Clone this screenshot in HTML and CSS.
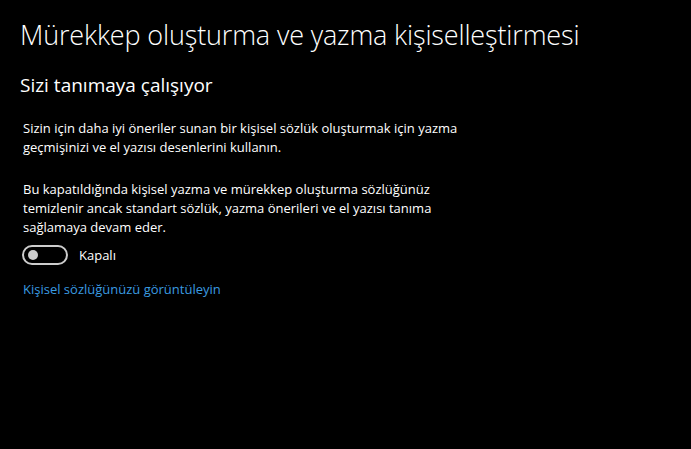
FILE: index.html
```html
<!DOCTYPE html>
<html lang="tr">
<head>
    <meta charset="UTF-8">
    <title>Mürekkep oluşturma ve yazma kişiselleştirmesi</title>
    <link rel="stylesheet" href="styles.css">
</head>
<body>
    <div class="page">
        <h1 class="title">Mürekkep oluşturma ve yazma kişiselleştirmesi</h1>
        <h2 class="subtitle">Sizi tanımaya çalışıyor</h2>
        <p class="text">Sizin için daha iyi öneriler sunan bir kişisel sözlük oluşturmak için yazma geçmişinizi ve el yazısı desenlerini kullanın.</p>
        <p class="text">Bu kapatıldığında kişisel yazma ve mürekkep oluşturma sözlüğünüz temizlenir ancak standart sözlük, yazma önerileri ve el yazısı tanıma sağlamaya devam eder.</p>
        <div class="toggle-row">
            <div class="toggle"><div class="knob"></div></div>
            <span class="toggle-label">Kapalı</span>
        </div>
        <a class="link" href="#">Kişisel sözlüğünüzü görüntüleyin</a>
    </div>
</body>
</html>
```

FILE: styles.css
```css
body {
    margin: 0;
    background: #000;
    color: #fff;
    font-family: "Open Sans", "Noto Sans", sans-serif;
    height: 100vh;
}
.page {
    padding: 12px 20px 0 20px;
}
.title {
    font-size: 27px;
    font-weight: 300;
    margin: 0;
    line-height: 46px;
    letter-spacing: -0.15px;
}
.subtitle {
    font-size: 19px;
    font-weight: 400;
    margin: 14px 0 0 0;
    line-height: 26px;
}
.text {
    font-size: 13px;
    line-height: 19px;
    width: 455px;
    margin: 21px 0 0 3px;
}
.text + .text {
    margin-top: 23px;
}
.toggle-row {
    display: flex;
    align-items: center;
    margin: 8px 0 0 2px;
}
.toggle {
    height: 16px;
    border: 2px solid #ccc;
    border-radius: 10px;
    display: flex;
    align-items: center;
    padding: 0 4px;
    box-sizing: content-box;
    width: 34px;
}
.knob {
    width: 10px;
    height: 10px;
    border-radius: 50%;
    background: #ccc;
}
.toggle-label {
    font-size: 13px;
    margin-left: 11px;
}
.link {
    display: inline-block;
    color: #3a9be0;
    text-decoration: none;
    font-size: 13px;
    margin: 15px 0 0 3px;
}
```
